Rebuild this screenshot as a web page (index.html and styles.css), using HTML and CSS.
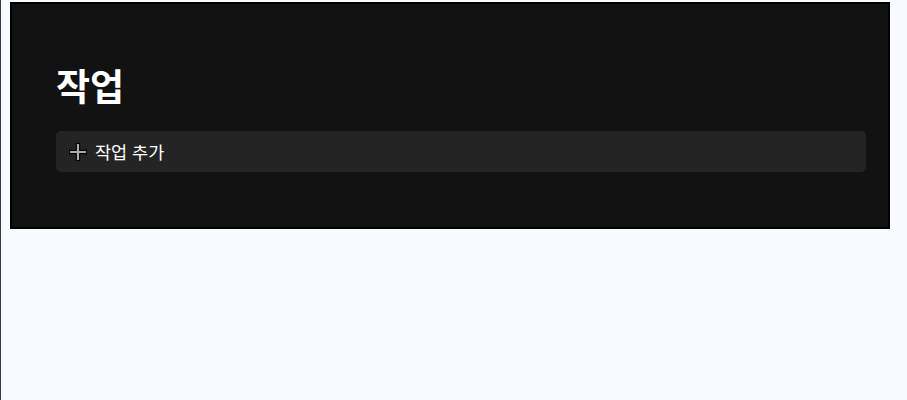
FILE: index.html
```html
<!DOCTYPE html>
<html lang="ko">
    <head>
        <meta charset="UTF-8">
        <meta name="viewport" content="width=device-width, initial-scale=1.0">
        <title>작업</title>
        <link rel="stylesheet" href="styles.css">
    </head>
    <body>
        <section class="tasks">
            <h1 class="tasks-title">작업</h1>
            <button class="add-task" type="button">
                <svg class="add-icon" width="20" height="20" viewBox="0 0 20 20">
                    <path d="M10 1v18M1 10h18" stroke="#000" stroke-width="4.5" fill="none"/>
                    <path d="M10 2v16M2 10h16" stroke="#ababab" stroke-width="2.2" fill="none"/>
                </svg>
                <span>작업 추가</span>
            </button>
        </section>
    </body>
</html>
```

FILE: styles.css
```css
html { min-height: 100%; box-sizing: border-box; border-left: 1px solid #3a3a3a; background: #f7faff; }
body { margin: 0; padding: 2px 0 0 9px; font-family: "Noto Sans CJK KR", "Noto Sans", sans-serif; }
.tasks { box-sizing: border-box; width: 880px; height: 227px; padding: 58px 22px 0 44px; background: #121212; border: 2px solid #000; }
.tasks-title { margin: 0 0 23px 0; font-size: 37px; line-height: 46px; font-weight: 700; color: #fff; }
.add-task { display: flex; align-items: center; gap: 7px; width: 100%; height: 41px; padding: 0 11px 0 12px; background: #242424; border: 0; border-radius: 5px; color: #fff; font-family: inherit; font-size: 17.5px; text-align: left; cursor: pointer; }
.add-icon { flex: none; }
```
